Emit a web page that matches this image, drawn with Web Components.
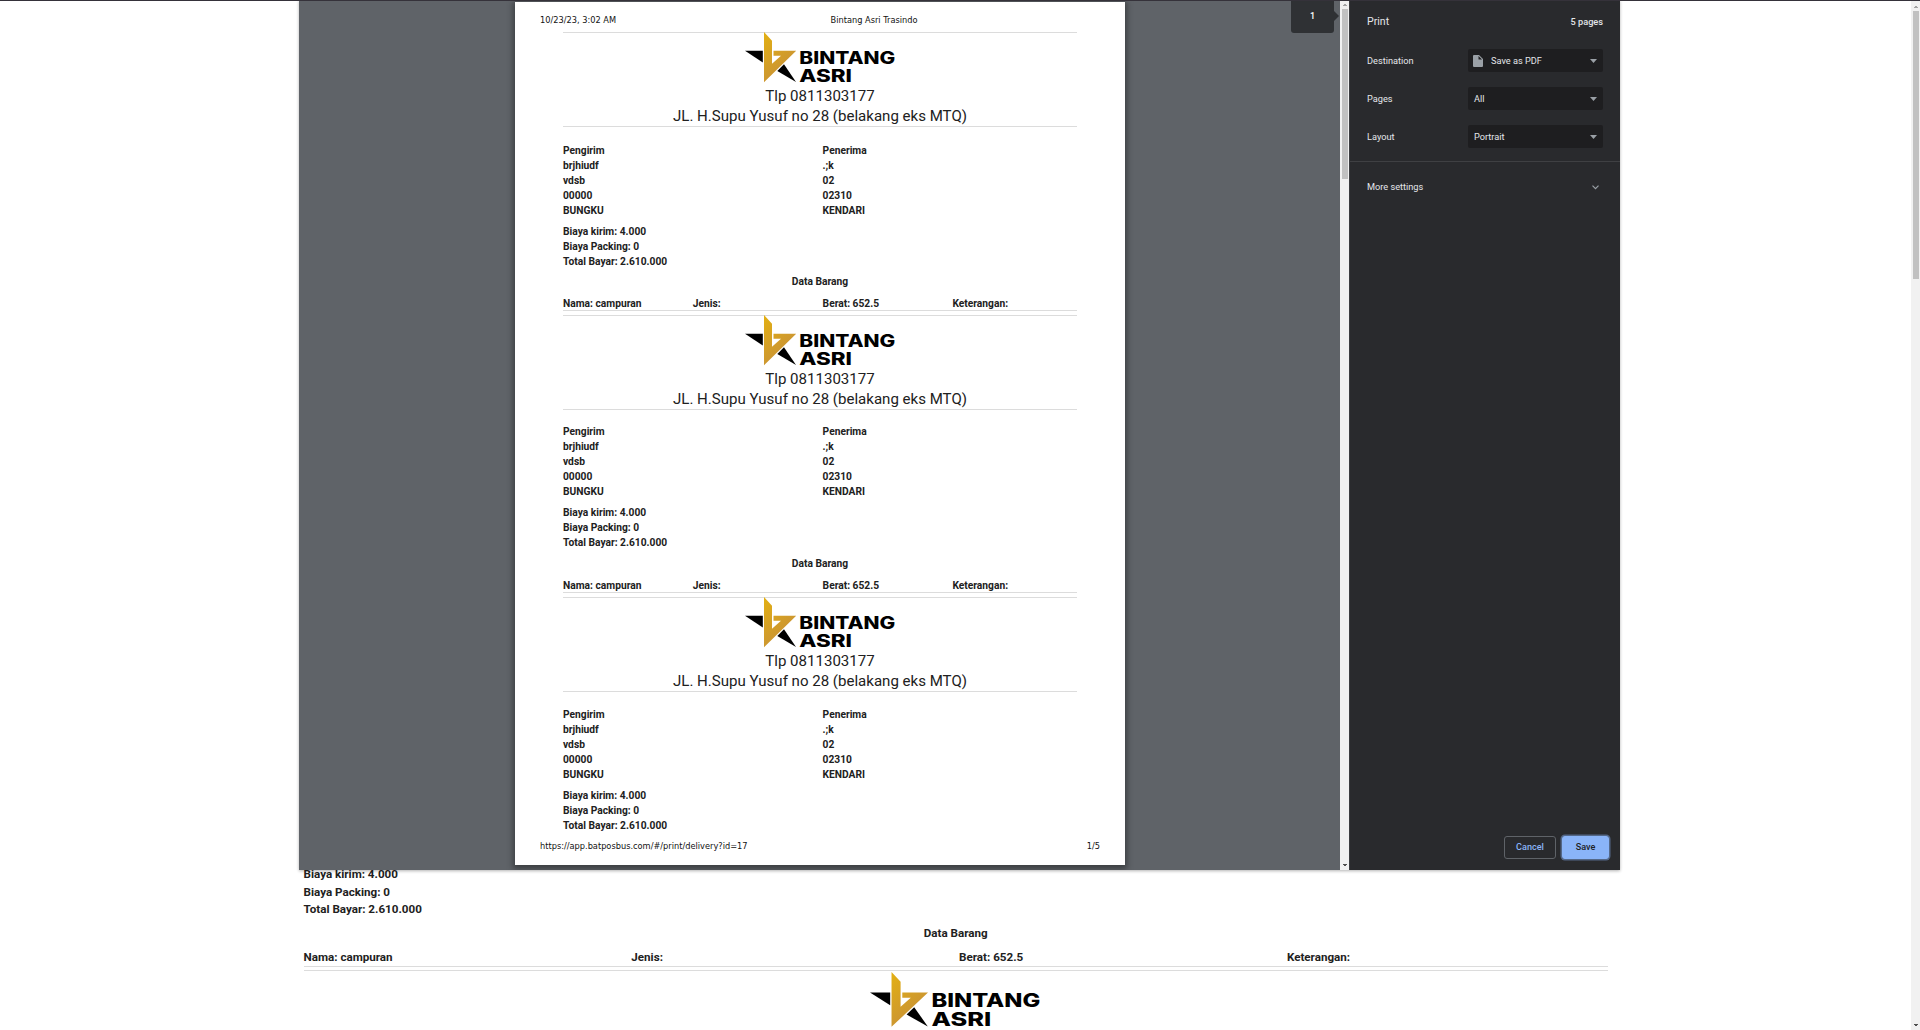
<!DOCTYPE html>
<html lang="id"><head><meta charset="utf-8"><title>Bintang Asri Trasindo</title>
<style>html,body{margin:0;height:100%;overflow:hidden;background:#fff}</style></head>
<body><print-app></print-app>
<script>
const define=(name,html)=>customElements.define(name,class extends HTMLElement{
  constructor(){super();this.attachShadow({mode:'open'}).innerHTML=typeof html==='function'?html(this):html;}
});

define('brand-logo',`<style>:host{display:block;width:var(--logo-w,150px);height:var(--logo-h,50px)}svg{display:block;width:100%;height:100%;overflow:visible}
text{font:800 16.3px Inter,"DejaVu Sans",sans-serif;fill:#000}</style>
<svg viewBox="0 0 150 48" preserveAspectRatio="none"><defs><linearGradient id="g" x1="0" y1="0" x2=".6" y2="1"><stop offset="0" stop-color="#e3b012"/><stop offset="1" stop-color="#c68f3a"/></linearGradient></defs>
<path d="M0 18H17.8V29.2Z" fill="#000"/><path d="M39 31L51 48L32.3 37.5Z" fill="#000"/>
<path d="M19 0L27 8.5V30.5L36 22.7H28.5V18H51.2L19 48.3Z" fill="url(#g)"/>
<text x="54.3" y="30.6" textLength="96" lengthAdjust="spacingAndGlyphs">BINTANG</text>
<text x="54.3" y="47.7" textLength="52.7" lengthAdjust="spacingAndGlyphs">ASRI</text></svg>`);

define('goods-row',`<style>:host{display:grid;grid-template-columns:repeat(4,var(--goods-col))}</style><span>Nama: campuran</span><span>Jenis:</span><span>Berat: 652.5</span><span>Keterangan:</span>`);

define('delivery-receipt',`<style>
:host{display:flex;flex-direction:column;box-sizing:border-box;height:282.5px;flex:none;font:700 10.24px/15px Roboto,sans-serif;color:#212121;border-top:1px solid #dcdcdc;white-space:nowrap;--goods-col:129.8px}
header{display:flex;flex-direction:column;align-items:center;height:94px;box-sizing:border-box;border-bottom:1px solid #dcdcdc;font:400 15.05px/20px Roboto,sans-serif}
brand-logo{margin:-1px 0 4px}
.people{display:grid;grid-template-columns:259.6px 1fr;margin-top:var(--body-gap,15.6px)}
.people,.fees{line-height:15px}.people div,.fees{display:flex;flex-direction:column}
.fees{margin-top:6px}h2{font:inherit;text-align:center;margin:5.8px 0 6.8px}
goods-row{line-height:15px;height:14px;border-bottom:1px solid #dcdcdc}
:host([partial]) .goods{display:none}
</style><header><brand-logo></brand-logo><span>Tlp 0811303177</span><span>JL. H.Supu Yusuf no 28 (belakang eks MTQ)</span></header>
<section class="people"><div><span>Pengirim</span><span>brjhiudf</span><span>vdsb</span><span>00000</span><span>BUNGKU</span></div><div><span>Penerima</span><span>.;k</span><span>02</span><span>02310</span><span>KENDARI</span></div></section>
<section class="fees"><span>Biaya kirim: 4.000</span><span>Biaya Packing: 0</span><span>Total Bayar: 2.610.000</span></section>
<section class="goods"><h2>Data Barang</h2><goods-row></goods-row></section>`);

define('print-sheet',`<style>:host{display:flex;flex-direction:column;box-sizing:border-box;width:610px;height:863px;background:#fff;box-shadow:0 2px 6px 2px rgba(0,0,0,.38);padding:0 25px;font:8.24px/12px "DejaVu Sans",sans-serif;color:#111}
header{display:grid;grid-template-columns:290.5px 1fr;height:30px;padding-top:12px;box-sizing:border-box}
main{display:flex;flex-direction:column;padding:0 23px;height:807px;overflow:hidden}
delivery-receipt+delivery-receipt{--body-gap:14.9px}
footer{display:flex;justify-content:space-between;padding-top:.6px}
</style><header><span>10/23/23, 3:02 AM</span><span>Bintang Asri Trasindo</span></header>
<main><delivery-receipt></delivery-receipt><delivery-receipt></delivery-receipt><delivery-receipt partial></delivery-receipt></main>
<footer><span>https://app.batposbus.com/#/print/delivery?id=17</span><span>1/5</span></footer>`);

define('scroll-track',`<style>:host{display:flex;flex-direction:column;align-items:center;width:9px;background:#f1f1f1;box-sizing:border-box;padding-left:1px;padding-top:var(--inset,0)}
i{flex:none;width:6px;height:var(--thumb);background:#c1c1c1}svg{display:block;flex:none;width:6px;height:9px}.down{margin-top:auto}</style>
<svg viewBox="0 0 6 9"><path d="M1 6V5H2V4H4V5H5V6Z" fill="#a3a3a3"/></svg><i></i><svg class="down" viewBox="0 0 6 9"><path d="M1 3H5V4H4V5H2V4H1Z" fill="#505050"/></svg>`);

define('setting-row',el=>`<style>:host{display:flex;align-items:center;justify-content:space-between;height:23px;margin-bottom:15px}
.select{display:flex;align-items:center;box-sizing:border-box;width:135px;height:23px;padding:0 6px;border-radius:2px;background:#1e1e20}
svg{display:block}.arrow{margin-left:auto}.doc{margin:0 8px 0 -1px}</style><span>${el.getAttribute('label')}</span>
<div class="select">${el.hasAttribute('file')?'<svg class="doc" width="10" height="12" viewBox="0 0 10 12"><path d="M1 0H6L10 4V11Q10 12 9 12H1Q0 12 0 11V1Q0 0 1 0ZM5.5 1V4.5H9Z" fill="#9aa0a6" fill-rule="evenodd"/></svg>':''}<slot></slot><svg class="arrow" width="7" height="4" viewBox="0 0 7 4"><path d="M0 0H7L3.5 4Z" fill="#9aa0a6"/></svg></div>`);

define('action-button',`<style>:host{display:flex;align-items:center;justify-content:center;box-sizing:border-box;width:52px;height:23px;padding-bottom:1px;border:1px solid #5f6368;border-radius:3px;color:#8ab4f8;font:500 9.1px Roboto,sans-serif}
:host([primary]){width:47px;border-color:#8ab4f8;background:#8ab4f8;color:#202124;box-shadow:0 0 0 1.5px rgba(138,180,248,.45)}</style><slot></slot>`);

define('print-settings',`<style>:host{display:flex;flex-direction:column;box-sizing:border-box;width:271px;background:#292a2d;border-left:1px solid #3c3d40;color:#e4e6ea;font:400 9.2px/12px Roboto,sans-serif}
.head{display:flex;justify-content:space-between;align-items:center;height:49px;padding:0 17px 6px;box-sizing:border-box}h1{font:400 10.6px Roboto,sans-serif;margin:0}.head span{font-weight:500}
.rows{padding:0 17px;height:112px}.more{display:flex;justify-content:space-between;align-items:center;border-top:1px solid #3f4043;padding:0 21px 0 17px;height:50px}
footer{display:flex;gap:6px;margin-top:auto;justify-content:flex-end;padding:0 11px 11px 0}</style>
<div class="head"><h1>Print</h1><span>5 pages</span></div><div class="rows"><setting-row label="Destination" file>Save as PDF</setting-row><setting-row label="Pages">All</setting-row><setting-row label="Layout">Portrait</setting-row></div>
<div class="more"><span>More settings</span><svg width="7" height="5" viewBox="0 0 7 5"><path d="M.5 .7L3.5 3.7L6.5 .7" fill="none" stroke="#9aa0a6" stroke-width="1.2"/></svg></div>
<footer><action-button>Cancel</action-button><action-button primary>Save</action-button></footer>`);

define('page-badge',`<style>:host{display:block;position:absolute;left:992px;top:0;width:43px;height:33px;border-radius:0 0 3px 3px;background:#2f3134;color:#fff;font:500 9px/32px Roboto,sans-serif;text-align:center}
svg{position:absolute;left:43px;top:11px}</style><span>1</span><svg width="5" height="10" viewBox="0 0 5 10"><path d="M0 0L5 5L0 10Z" fill="#2f3134"/></svg>`);

define('print-dialog',`<style>:host{display:flex;position:absolute;left:299px;top:0;width:1321px;height:870px;box-shadow:0 1px 3px rgba(0,0,0,.3)}
.preview{flex:1;display:flex;background:#5f6368;padding:2px 0 0 216px;overflow:hidden}scroll-track{--thumb:170px;--inset:0px}</style>
<div class="preview"><print-sheet></print-sheet></div><scroll-track></scroll-track><print-settings></print-settings><page-badge></page-badge>`);

define('delivery-page',`<style>:host{display:flex;flex-direction:column;flex:1;box-sizing:border-box;padding:865px 303px 0 303.5px;font:700 11.64px/17.6px Roboto,sans-serif;color:#212121;overflow:hidden;white-space:nowrap;--goods-col:327.8px}
.fees{display:flex;flex-direction:column}h2{font:inherit;text-align:center;margin:6px 0}goods-row{line-height:18px;height:18px;border-bottom:1px solid #dcdcdc}
.next{display:flex;justify-content:center;border-top:1px solid #dcdcdc;margin-top:3px;padding:1px 1px 0 0}brand-logo{flex:none;--logo-w:170px;--logo-h:54.5px}</style>
<div class="fees"><span>Biaya kirim: 4.000</span><span>Biaya Packing: 0</span><span>Total Bayar: 2.610.000</span></div><h2>Data Barang</h2><goods-row></goods-row><div class="next"><brand-logo></brand-logo></div>`);

define('print-app',`<style>:host{display:flex;position:relative;box-sizing:border-box;width:1920px;height:1030px;overflow:hidden;border-top:1px solid #35323a}
print-dialog{margin-top:-1px}scroll-track{--thumb:268px;--inset:1px}</style><delivery-page></delivery-page><scroll-track></scroll-track><print-dialog></print-dialog>`);
</script></body></html>
